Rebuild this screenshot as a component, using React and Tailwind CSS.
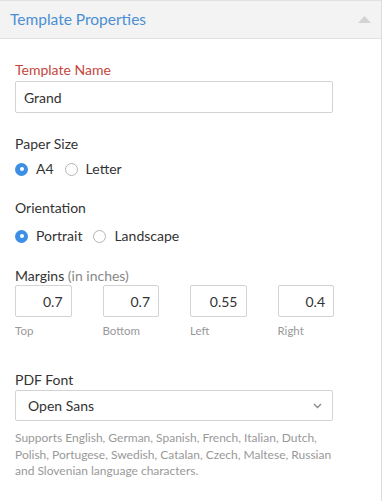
import React from "react";

const Radio = ({ checked, label }) => (
  <label className="flex items-center gap-2 text-[14px] leading-[18px] text-[#333]">
    {checked ? (
      <span className="w-[13px] h-[13px] rounded-full bg-[#3d8fe6] flex items-center justify-center">
        <span className="w-[4px] h-[4px] rounded-full bg-white" />
      </span>
    ) : (
      <span className="w-[13px] h-[13px] rounded-full border border-[#b5b5b5] bg-white" />
    )}
    <span>{label}</span>
  </label>
);

const MarginBox = ({ value, label }) => (
  <div className="flex flex-col">
    <div className="h-[32px] border border-[#d3d3d3] rounded-[2px] flex items-center justify-end px-[8px] text-[14px] text-[#333]">
      {value}
    </div>
    <span className="mt-[6px] text-[11.5px] leading-[16px] text-[#999]">{label}</span>
  </div>
);

const App = () => {
  return (
    <div
      className="w-[382px] h-[501px] bg-white border-r border-[#dcdcdc] flex flex-col"
      style={{ fontFamily: "Lato, 'Liberation Sans', sans-serif" }}
    >
      <div className="h-[39px] bg-[#f3f3f3] border-t border-b border-[#e0e0e0] flex items-center justify-between pl-[10px] pr-[10px]">
        <h2 className="text-[15.5px] text-[#4a8fd4]">Template Properties</h2>
        <svg width="13" height="7" viewBox="0 0 13 7">
          <path d="M0 7 L6.5 0 L13 7 Z" fill="#d3d3d3" />
        </svg>
      </div>

      <div className="px-[15px] pt-[22px] w-[318px] box-content">
        <div>
          <p className="text-[14px] text-[#c4463c] leading-[18px]">Template Name</p>
          <div className="mt-[2px] h-[32px] border border-[#d3d3d3] rounded-[2px] flex items-center px-[8px] text-[14px] text-[#333]">
            Grand
          </div>
        </div>

        <div className="mt-[22px]">
          <p className="text-[14px] text-[#333] leading-[18px]">Paper Size</p>
          <div className="mt-[7px] flex items-center gap-[11px]">
            <Radio checked label="A4" />
            <Radio label="Letter" />
          </div>
        </div>

        <div className="mt-[21px]">
          <p className="text-[14px] text-[#333] leading-[18px]">Orientation</p>
          <div className="mt-[10px] flex items-center gap-[11px]">
            <Radio checked label="Portrait" />
            <Radio label="Landscape" />
          </div>
        </div>

        <div className="mt-[22px]">
          <p className="text-[14px] text-[#333] leading-[18px]">
            Margins <span className="text-[#888]">(in inches)</span>
          </p>
          <div className="grid grid-cols-4 gap-x-[31px] w-[319px]">
            <MarginBox value="0.7" label="Top" />
            <MarginBox value="0.7" label="Bottom" />
            <MarginBox value="0.55" label="Left" />
            <MarginBox value="0.4" label="Right" />
          </div>
        </div>

        <div className="mt-[32px]">
          <p className="text-[14px] text-[#333] leading-[18px]">PDF Font</p>
          <div className="mt-[1px] h-[31px] border border-[#d3d3d3] rounded-[2px] flex items-center justify-between pl-[12px] pr-[10px] text-[14px] text-[#333]">
            <span>Open Sans</span>
            <svg width="9" height="6" viewBox="0 0 9 6">
              <path d="M1 1 L4.5 4.5 L8 1" stroke="#888" strokeWidth="1.3" fill="none" />
            </svg>
          </div>
          <p className="mt-[9px] text-[12px] leading-[16.5px] text-[#999]">
            Supports English, German, Spanish, French, Italian, Dutch, Polish, Portugese,
            Swedish, Catalan, Czech, Maltese, Russian and Slovenian language characters.
          </p>
        </div>
      </div>
    </div>
  );
};

export default App;
